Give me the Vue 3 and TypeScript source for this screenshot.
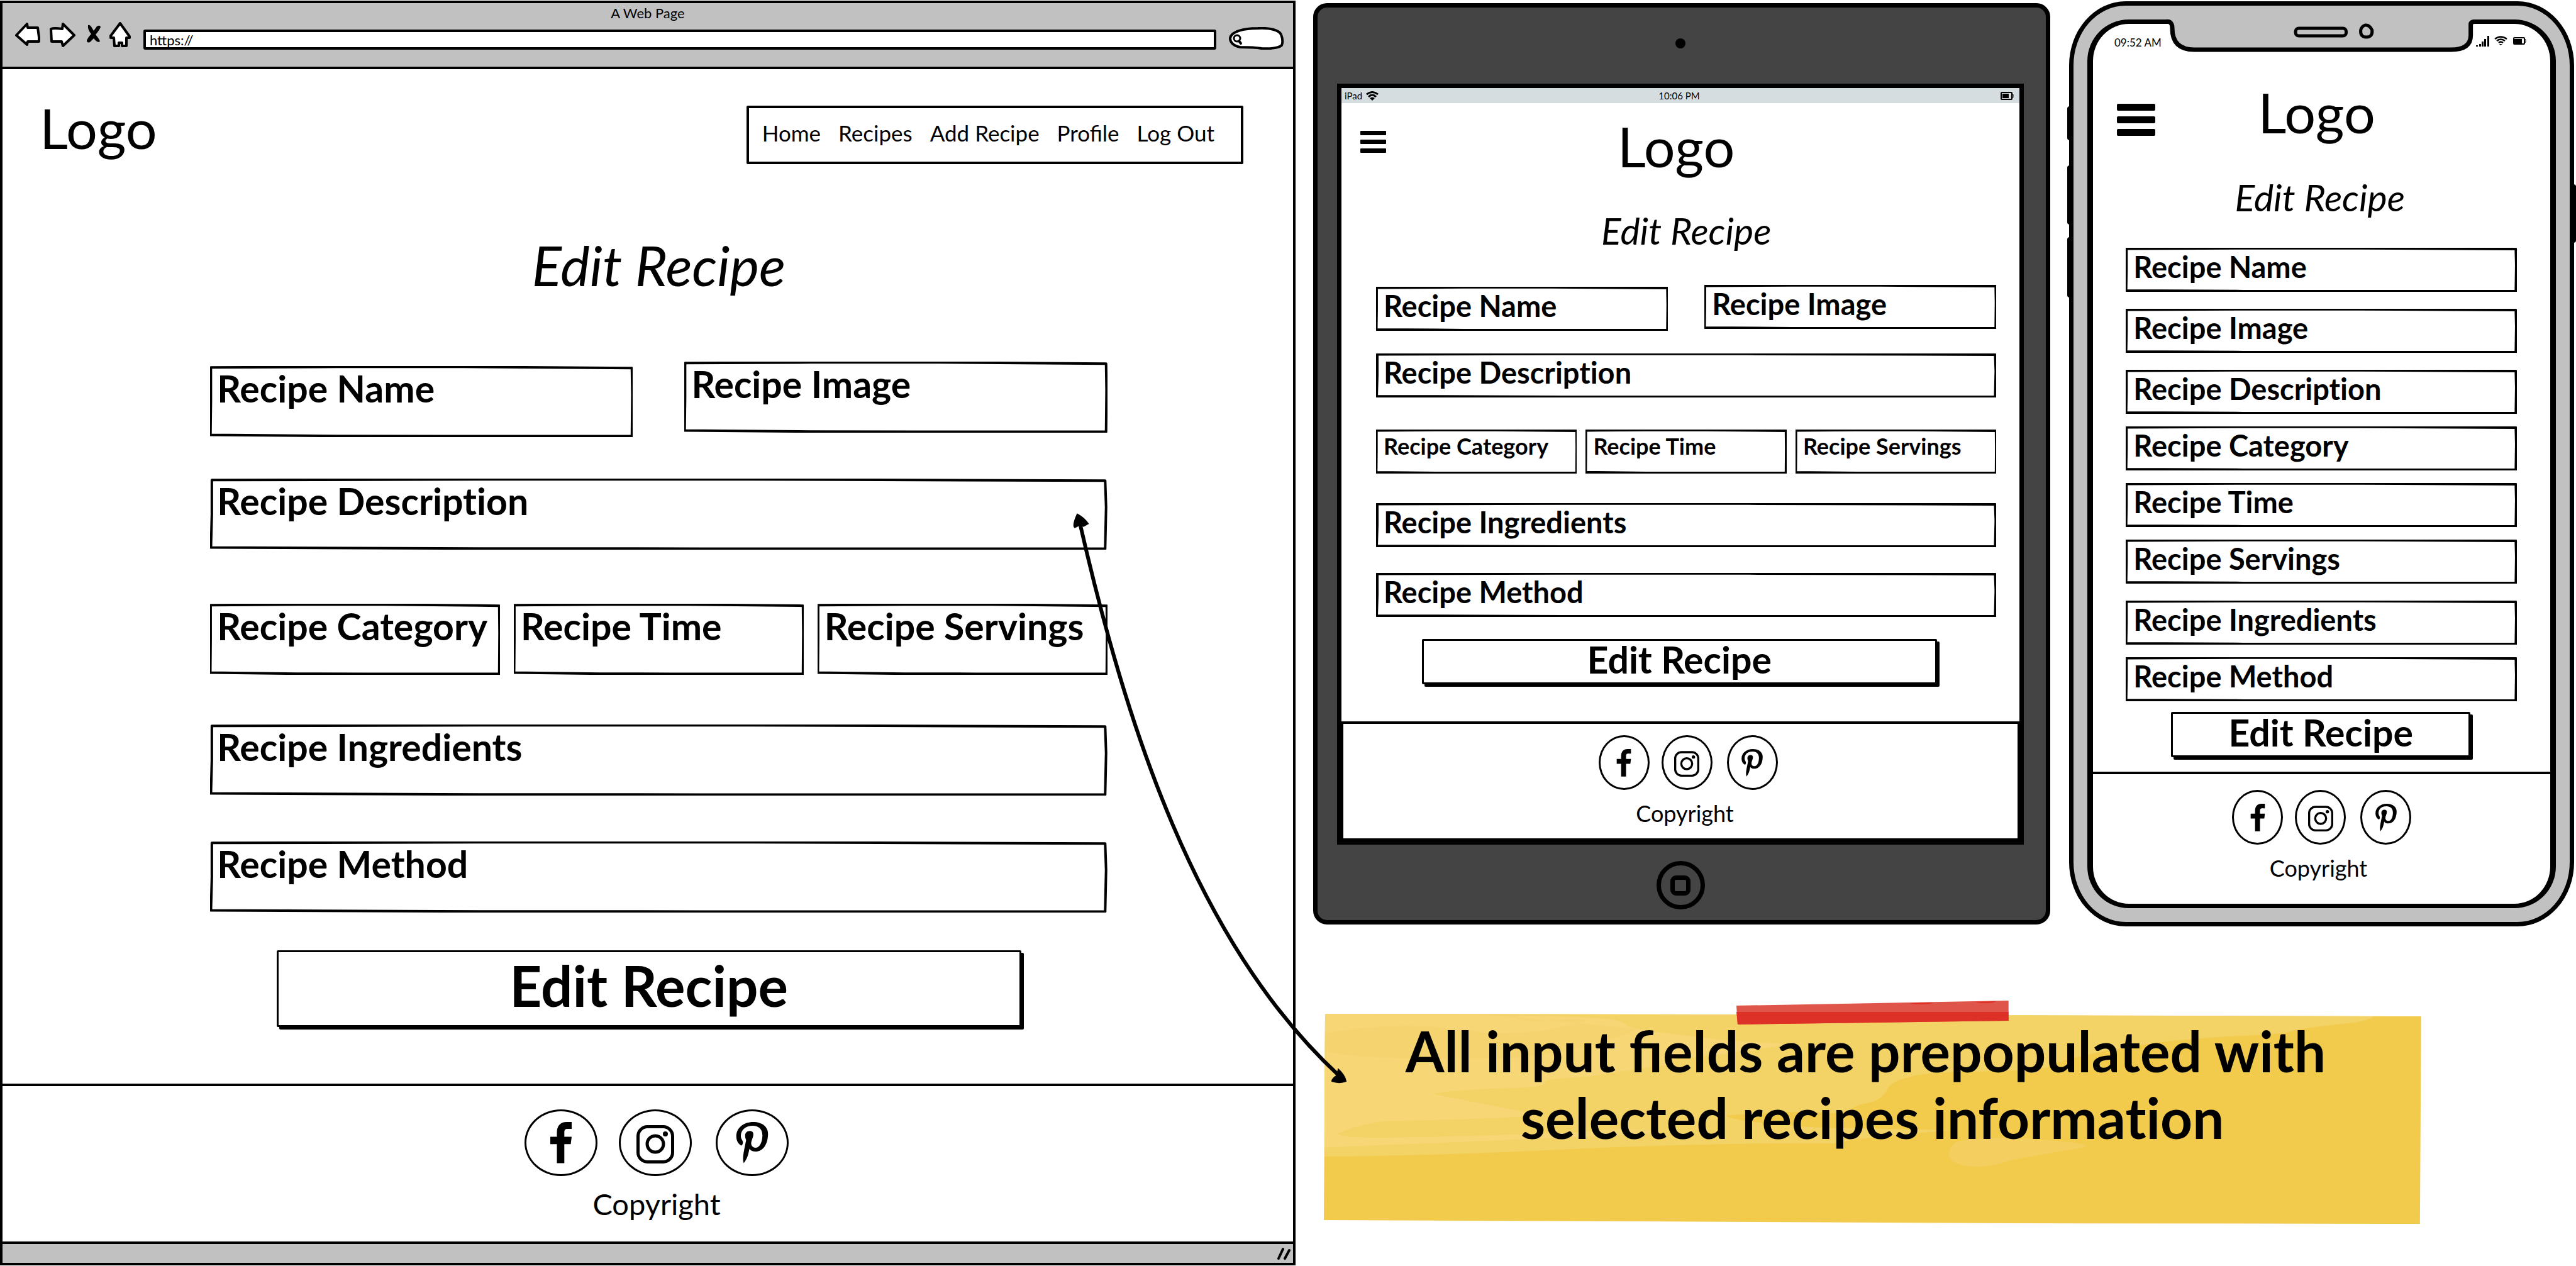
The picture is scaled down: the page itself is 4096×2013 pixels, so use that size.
<script setup lang="ts">
import { reactive } from 'vue'

interface Field {
  name: string
  value: string
}

const field = (name: string): Field => ({ name: name.toLowerCase().replace(' ', '-'), value: name })

const wideRows: string[][] = [
  ['Recipe Name', 'Recipe Image'],
  ['Recipe Description'],
  ['Recipe Category', 'Recipe Time', 'Recipe Servings'],
  ['Recipe Ingredients'],
  ['Recipe Method'],
]

const desktopRows = reactive<Field[][]>(wideRows.map((row) => row.map(field)))
const tabletRows = reactive<Field[][]>(wideRows.map((row) => row.map(field)))
const phoneRows = reactive<Field[][]>(wideRows.flat().map((name) => [field(name)]))

const links: string[] = ['Home', 'Recipes', 'Add Recipe', 'Profile', 'Log Out']

// Slightly uneven hand-drawn rectangle, in percent of the box it outlines
const frame = 'M.2 2 L30 1.2 L60 1.2 L99.8 2.800 L99.9 40 L99.8 98.6 L55 98.6 L30 98.4 L.1 97 L.2 50 Z'

const facebook =
  'M50 0V11H43C39.500 11 38.300 13 38.300 17V23.600H50L48.500 35.300H38.300V65.500H26.500V35.300H16V23.600H26.500V17C26.500 6 32 0 42 0Z'
const pinterest =
  'M16 37.500C11 35.500 7.800 30 7.800 22.600C7.800 9 20 0 34.600 0C49 0 58.200 8 58.200 18.400C58.200 36 49.500 47 38.400 47C34 47 30.500 45.500 28.500 42.700C27 52 25 58.500 19.600 65.500C18.600 62 18.300 59 18.600 55.700C19 49 22 36 23.400 28.700C22.500 27 21.800 24.500 21.800 21.300C21.800 17 25 14.200 29.500 14.200C33 14.200 34.900 16.500 34.900 19.400C34.900 24 31.400 30 31.400 34C31.400 38 34.500 41 38.400 41C46 41 49.300 30 49.300 21.300C49.300 11 43 6 34 6C22 6 15 13 15 22C15 28 18.500 29 18.300 33C18 35 17 37.500 16 37.500Z'

const socials: string[] = ['Facebook', 'Instagram', 'Pinterest']
</script>

<template>
  <main class="board">
    <section class="browser" aria-label="Desktop">
      <header class="chrome">
        <div class="chrome-title">A Web Page</div>
        <div class="toolbar">
          <div class="tools">
            <button type="button" class="tool" aria-label="Back">
              <svg width="40" height="44" viewBox="0 0 40 44">
                <path class="ink" d="M2 21 L19 3 L20 9 L36 9 L38 24 L38 31 L20 31 L19 36 Z" />
              </svg>
            </button>
            <button type="button" class="tool" aria-label="Forward">
              <svg width="42" height="44" viewBox="0 0 42 44">
                <path class="ink" d="M3 11 Q8 9 21 11 L22 3 L40 21 L22 38 L20 31 L4 31 Z" />
              </svg>
            </button>
            <button type="button" class="tool" aria-label="Stop">
              <svg width="26" height="44" viewBox="0 0 26 44">
                <path d="M6 5 Q9 4 12 9 L15 14 L20 7 Q25 4 26 8 Q24 13 18 20 Q24 27 25 31 Q21 34 15 26 L9 32 Q4 34 4 29 Q7 23 11 19 Q5 12 6 5Z" />
              </svg>
            </button>
            <button type="button" class="tool" aria-label="Home">
              <svg width="34" height="44" viewBox="0 0 34 44">
                <path class="ink" d="M17 2 L32 23 L32 25 L27 25 L27 38 L20 38 L20 33 L15 33 L15 38 L8 38 L7 25 L2 25 L2 22 Z" />
              </svg>
            </button>
          </div>
          <input class="url" type="text" value="https://" aria-label="Address" />
          <div class="search">
            <svg viewBox="0 0 88 36" width="88" height="36" aria-hidden="true">
              <path class="ink" d="M46 2 C66 1 80 5 83 12 Q87 22 84 29 C80 33 66 35 52 34 C40 32 28 32 18 32 C7 30 2 24 2 18 C3 7 24 2 46 2Z" />
              <ellipse cx="13" cy="18" rx="5" ry="5" fill="none" stroke="#000" stroke-width="3" />
              <path d="M16 22 L19 26" stroke="#000" stroke-width="4" stroke-linecap="round" />
            </svg>
            <input class="search-input" type="search" aria-label="Search" />
          </div>
        </div>
      </header>

      <div class="page">
        <div class="masthead">
          <div class="logo">Logo</div>
          <nav class="nav">
            <a v-for="link in links" :key="link" href="#">{{ link }}</a>
          </nav>
        </div>
        <form class="form form-desktop" @submit.prevent>
          <h1 class="heading">Edit Recipe</h1>
          <div v-for="(row, i) in desktopRows" :key="i" class="row" :class="`cols-${row.length}`">
            <div v-for="f in row" :key="f.name" class="field">
              <input v-model="f.value" type="text" :name="f.name" :aria-label="f.name" />
              <svg class="frame" viewBox="0 0 100 100" preserveAspectRatio="none" aria-hidden="true"><path :d="frame" /></svg>
            </div>
          </div>
          <button class="submit" type="submit">Edit Recipe</button>
        </form>
        <footer class="foot foot-desktop">
          <div class="socials">
            <a v-for="s in socials" :key="s" class="ring" href="#" :aria-label="s">
              <svg viewBox="0 0 66 66">
                <path v-if="s === 'Facebook'" :d="facebook" />
                <g v-else-if="s === 'Instagram'" fill="none" stroke="#000" stroke-width="5">
                  <rect x="5.500" y="7.500" width="55" height="56" rx="15" />
                  <circle cx="33" cy="35" r="13" />
                  <circle cx="49" cy="19" r="4" fill="#000" stroke="none" />
                </g>
                <path v-else :d="pinterest" />
              </svg>
            </a>
          </div>
          <p class="copyright">Copyright</p>
        </footer>
      </div>
      <div class="statusline">
        <svg width="26" height="20" viewBox="0 0 26 20" aria-hidden="true">
          <path d="M3 18 L10 3 M13 18 L20 5" stroke="#000" stroke-width="4" stroke-linecap="round" />
        </svg>
      </div>
    </section>

    <div class="side">
      <div class="devices">
        <section class="tablet" aria-label="Tablet">
          <div class="camera"></div>
          <div class="tablet-screen">
            <div class="tablet-status">
              <span class="carrier">
                iPad
                <svg width="20" height="15" viewBox="0 0 20 15" aria-hidden="true">
                  <g fill="none" stroke="#000" stroke-width="3">
                    <path d="M1 5 Q10 -2 19 5" />
                    <path d="M4 9 Q10 3 16 9" />
                  </g>
                  <path d="M6 11 Q10 8 14 11 L10 15Z" />
                </svg>
              </span>
              <span>10:06 PM</span>
              <svg class="battery" width="21" height="13" viewBox="0 0 21 13" aria-hidden="true">
                <rect x="1" y="1" width="17" height="11" rx="1" fill="none" stroke="#000" stroke-width="2" />
                <rect x="3" y="3" width="10" height="7" />
                <path d="M18 4 L20 4 L20 9 L18 9" fill="none" stroke="#000" />
              </svg>
            </div>
            <div class="masthead-small masthead-tablet">
              <button type="button" class="burger" aria-label="Menu">
                <svg width="41" height="35" viewBox="0 0 41 35">
                  <rect width="41" height="7" rx="1" /><rect y="14" width="41" height="7" rx="1" /><rect y="28" width="41" height="7" rx="1" />
                </svg>
              </button>
              <div class="logo">Logo</div>
            </div>
            <form class="form form-small form-tablet" @submit.prevent>
              <h1 class="heading">Edit Recipe</h1>
              <div v-for="(row, i) in tabletRows" :key="i" class="row" :class="`cols-${row.length}`">
                <div v-for="f in row" :key="f.name" class="field">
                  <input v-model="f.value" type="text" :name="f.name" :aria-label="f.name" />
                  <svg class="frame" viewBox="0 0 100 100" preserveAspectRatio="none" aria-hidden="true"><path :d="frame" /></svg>
                </div>
              </div>
              <button class="submit" type="submit">Edit Recipe</button>
            </form>
            <footer class="foot foot-small foot-tablet">
              <div class="socials">
                <a v-for="s in socials" :key="s" class="ring" href="#" :aria-label="s">
                  <svg viewBox="0 0 66 66">
                    <path v-if="s === 'Facebook'" :d="facebook" />
                    <g v-else-if="s === 'Instagram'" fill="none" stroke="#000" stroke-width="5">
                      <rect x="5.500" y="7.500" width="55" height="56" rx="15" />
                      <circle cx="33" cy="35" r="13" />
                      <circle cx="49" cy="19" r="4" fill="#000" stroke="none" />
                    </g>
                    <path v-else :d="pinterest" />
                  </svg>
                </a>
              </div>
              <p class="copyright">Copyright</p>
            </footer>
          </div>
          <button type="button" class="home" aria-label="Home button"><span></span></button>
        </section>

        <section class="phone" aria-label="Phone">
          <span class="key key-mute"></span>
          <span class="key key-up"></span>
          <span class="key key-down"></span>
          <span class="key key-power"></span>
          <div class="phone-screen">
            <div class="phone-status">
              <span class="clock">09:52 AM</span>
              <svg class="notch" viewBox="0 0 480 52" preserveAspectRatio="none" aria-hidden="true">
                <path fill="#c1c1c1" d="M-1 -1 L2 6 Q4 12 5 20 Q5 46 39 48 L445 48 Q474 46 476 25 L477 6 L480 -1 Z" />
                <path fill="none" stroke="#000" stroke-width="7" d="M-6 3.500 Q4 2 4 14 Q4 48 39 48 L445 48 Q476 48 476 25 L476 8 Q476 3.500 482 3.500" />
                <rect x="199" y="14" width="80" height="12" rx="5" fill="none" stroke="#000" stroke-width="5" />
                <path fill="none" stroke="#000" stroke-width="5" d="M309 9 Q316 8 320 17 Q321 28 311 28 Q301 28 302 17 Q303 11 309 9Z" />
              </svg>
              <span class="signals">
                <svg width="80" height="18" viewBox="0 0 80 18" aria-hidden="true">
                  <path d="M0 16h3v2h-3zM5 14h3v4h-3zM9 10h3v8h-3zM13 6h3v12h-3zM18 1h3v17h-3z" />
                  <g fill="none" stroke="#000" stroke-width="2.500">
                    <path d="M30 6 Q39 -1 49 6" />
                    <path d="M33 9 Q39 4 46 9" />
                    <path d="M36 12 Q39 9 43 12" />
                  </g>
                  <path d="M37 14 L42 14 L39 16Z" />
                  <rect x="60" y="4" width="17" height="10" rx="1" fill="none" stroke="#000" stroke-width="2" />
                  <rect x="61" y="6" width="12" height="7" />
                  <path d="M77 6 L79 7 L79 11 L77 12" fill="none" stroke="#000" />
                </svg>
              </span>
            </div>
            <div class="masthead-small masthead-phone">
              <button type="button" class="burger" aria-label="Menu">
                <svg width="61" height="51" viewBox="0 0 61 51">
                  <rect width="61" height="11" rx="2" /><rect y="20" width="61" height="11" rx="2" /><rect y="40" width="61" height="11" rx="2" />
                </svg>
              </button>
              <div class="logo">Logo</div>
            </div>
            <form class="form form-small form-phone" @submit.prevent>
              <h1 class="heading">Edit Recipe</h1>
              <div v-for="(row, i) in phoneRows" :key="i" class="row">
                <div v-for="f in row" :key="f.name" class="field">
                  <input v-model="f.value" type="text" :name="f.name" :aria-label="f.name" />
                  <svg class="frame" viewBox="0 0 100 100" preserveAspectRatio="none" aria-hidden="true"><path :d="frame" /></svg>
                </div>
              </div>
              <button class="submit" type="submit">Edit Recipe</button>
            </form>
            <footer class="foot foot-small foot-phone">
              <div class="socials">
                <a v-for="s in socials" :key="s" class="ring" href="#" :aria-label="s">
                  <svg viewBox="0 0 66 66">
                    <path v-if="s === 'Facebook'" :d="facebook" />
                    <g v-else-if="s === 'Instagram'" fill="none" stroke="#000" stroke-width="5">
                      <rect x="5.500" y="7.500" width="55" height="56" rx="15" />
                      <circle cx="33" cy="35" r="13" />
                      <circle cx="49" cy="19" r="4" fill="#000" stroke="none" />
                    </g>
                    <path v-else :d="pinterest" />
                  </svg>
                </a>
              </div>
              <p class="copyright">Copyright</p>
            </footer>
          </div>
        </section>
      </div>

      <aside class="note">
        <svg class="paper" viewBox="0 0 1745 334" preserveAspectRatio="none" aria-hidden="true">
          <path fill="#f2ca4c" d="M2 0 L600 1 L1745 4 L1743 334 L1100 333 L500 330 L0 328 Z" />
          <path fill="#f3d266" d="M2 0 L600 1 L1667 4 Q1672 8 1640 14 Q1560 22 1543 26 Q1540 32 1440 36 Q1340 42 1300 50 Q1230 60 1213 66 Q1170 74 1152 85 Q1110 92 1010 92 Q950 94 930 101 Q900 108 895 122 Q885 140 859 143 Q830 150 842 162 Q770 150 640 162 Q650 172 790 181 L1000 185 Q860 196 810 206 Q600 204 290 220 Q100 227 1 227 Z" />
          <path fill="#f6d675" d="M2 0 L249 1 Q400 4 450 8 Q480 12 483 20 Q510 28 630 41 Q700 46 740 48 Q700 56 620 66 Q530 72 554 80 Q480 90 420 100 Q340 104 353 110 Q350 116 300 118 Q180 122 176 128 L310 154 Q340 160 310 164 Q180 170 103 170 Q60 174 23 190 Q24 197 90 197 Q240 195 400 188 Q470 182 500 184 Q560 186 500 192 Q300 200 170 206 Q50 210 1 213 Z" />
          <path fill="#f3d266" d="M2 31 Q60 20 133 19 Q220 22 260 31 Q340 32 380 20 Q420 12 414 9 Q360 8 340 13 Q290 8 310 3 L249 1 L500 24 Q420 60 300 70 Q80 76 2 60 Z" opacity=".35" />
          <path fill="#f4cf5f" d="M1010 202 Q994 208 994 228 Q1005 244 1045 243 Q1075 240 1091 233 L1205 213 Q1226 208 1175 203 Q1080 192 1010 202Z" />
        </svg>
        <svg class="tape" viewBox="0 0 434 38" preserveAspectRatio="none" aria-hidden="true">
          <path fill="#e0554a" d="M0 8 L434 0 L434 32 L2 38 Z" />
          <path fill="#dd3026" d="M0 18 L434 18 L434 32 L2 38 Z" />
          <path fill="#dd3026" d="M276 4 L314 3 Q310 6 296 6 Q280 6 276 4Z M382 2 L414 1 Q412 4 398 4 Q386 4 382 2Z" />
        </svg>
        <p>All input fields are prepopulated with&nbsp;<br /><span class="plain">selected recipes information</span></p>
      </aside>
    </div>

    <svg class="arrow" viewBox="0 0 4096 2013" preserveAspectRatio="none" aria-hidden="true">
      <path d="M1717 832 C1790 1150 1900 1500 2130 1712" fill="none" stroke="#000" stroke-width="6" />
      <path d="M1713 818 Q1724 824 1730 833 L1723 837 L1717 835 L1709 839 Q1705 836 1713 818Z" stroke="#000" stroke-width="2" />
      <path d="M2128 1701 Q2138 1710 2140 1720 Q2130 1724 2118 1720 Q2118 1716 2126 1711Z" stroke="#000" stroke-width="2" />
    </svg>
  </main>
</template>

<style>
body {
  margin: 0;
  background: #fff;
}
</style>

<style scoped>
.board {
  position: relative;
  display: grid;
  grid-template-columns: 2060fr 2036fr;
  align-items: start;
  color: #000;
  font-family: Lato, 'Liberation Sans', sans-serif;
}

.board *,
.board {
  box-sizing: border-box;
}

button {
  padding: 0;
  border: 0;
  background: none;
  color: inherit;
  font-family: inherit;
}

input {
  min-width: 0;
  margin: 0;
  border: 0;
  outline: 0;
  background: none;
  color: inherit;
  font-family: inherit;
}

a {
  color: inherit;
  text-decoration: none;
}

svg {
  display: block;
}

.ink {
  fill: #fff;
  stroke: #000;
  stroke-width: 4;
  stroke-linejoin: round;
}

.logo {
  font-size: 88px;
  line-height: 106px;
}

.heading {
  margin: 0;
  font-style: italic;
  font-weight: 400;
  text-align: center;
}

/* Desktop browser */
.browser {
  margin-top: 1px;
  border: 4px solid #000;
  background: #fff;
}

.chrome {
  padding: 2px 0 27px;
  border-bottom: 4px solid #000;
  background: #c1c1c1;
}

.chrome-title {
  font-size: 22px;
  line-height: 28px;
  text-align: center;
}

.toolbar {
  display: flex;
  align-items: flex-end;
  gap: 20px;
  padding: 0 14px 0 20px;
}

.tools {
  display: flex;
  gap: 14px;
}

.url {
  flex: 1;
  height: 32px;
  padding: 0 6px;
  border: 4px solid #000;
  border-radius: 3px;
  background: #fff;
  font-size: 22px;
  line-height: 24px;
}

.search {
  position: relative;
}

.search-input {
  position: absolute;
  inset: 6px 8px 6px 24px;
  width: 56px;
}

.masthead {
  display: flex;
  align-items: flex-start;
  justify-content: space-between;
  padding: 40px 79px 0 59px;
}

.nav {
  display: flex;
  gap: 28px;
  margin-top: 18px;
  padding: 15px 42px 22px 21px;
  border: 4px solid #000;
  border-radius: 2px;
  font-size: 35px;
  line-height: 48px;
}

/* Forms */
.row {
  display: grid;
}

.cols-2 {
  grid-template-columns: 1fr 1fr;
}

.cols-2 .field:first-child {
  align-self: end;
}

.cols-3 {
  grid-template-columns: 1fr 1fr 1fr;
}

.field {
  position: relative;
  align-self: start;
}

.field input {
  display: block;
  width: 100%;
  font-weight: 700;
  font-variant-ligatures: none;
}

.frame {
  position: absolute;
  inset: 0;
  width: 100%;
  height: 100%;
  pointer-events: none;
}

.frame path {
  fill: none;
  stroke: #000;
  stroke-width: 4px;
  stroke-linejoin: round;
  vector-effect: non-scaling-stroke;
}

.submit {
  display: block;
  width: 83%;
  margin-left: 7.4%;
  border: 3px solid #000;
  border-radius: 2px;
  box-shadow: 4px 4px 0 #000;
  background: #fff;
  font-weight: 700;
}

.form-desktop {
  padding: 107px 14.4% 90px 16.1%;
}

.form-desktop .heading {
  margin-bottom: 101px;
  font-size: 88px;
  line-height: 106px;
}

.form-desktop .field input {
  height: 113px;
  padding: 0 11px 43px;
  font-size: 59px;
  line-height: 70px;
}

.form-desktop .cols-2 {
  min-height: 120px;
  column-gap: 82px;
  margin-bottom: 66px;
}

.form-desktop .cols-3 {
  column-gap: 22px;
  margin: 86px 0 79px;
}

.form-desktop .cols-1 + .cols-1 {
  margin: 73px 0 60px;
}

.form-desktop .submit {
  padding-bottom: 10px;
  font-size: 89px;
  line-height: 106px;
}

.form-small .heading {
  font-size: 59px;
  line-height: 70px;
}

.form-small .field input {
  height: 70px;
  padding: 0 12px 10px;
  font-size: 47px;
  line-height: 60px;
}

.form-small .submit {
  padding-bottom: 6px;
  font-size: 59px;
  line-height: 60px;
}

/* Footers */
.foot {
  border-top: 4px solid #000;
}

.socials {
  display: flex;
  justify-content: center;
}

.ring {
  display: grid;
  place-items: center;
  border: 3px solid #000;
  border-radius: 50%;
}

.ring:last-child {
  margin-left: 4px;
}

.copyright {
  margin: 16px 0 0;
  text-align: center;
}

.foot-desktop {
  padding: 37px 0 32px 28px;
}

.foot-desktop .socials {
  gap: 34px;
}

.foot-desktop .ring {
  width: 116px;
  height: 106px;
}

.foot-desktop .ring svg {
  width: 66px;
  height: 66px;
}

.foot-desktop .copyright {
  font-size: 47px;
  line-height: 56px;
}

.foot-small .socials {
  gap: 19px;
}

.foot-small .ring {
  width: 81px;
  height: 87px;
}

.foot-small .ring svg {
  width: 44px;
  height: 44px;
}

.foot-small .copyright {
  padding-right: 10px;
  font-size: 36px;
  line-height: 42px;
}

.statusline {
  display: flex;
  align-items: center;
  justify-content: flex-end;
  height: 34px;
  border-top: 4px solid #000;
  background: #c1c1c1;
}

/* Devices */
.devices {
  display: grid;
  grid-template-columns: 1172fr 803fr;
  align-items: start;
  gap: 30px;
  padding: 0 3px 0 28px;
}

.tablet {
  margin-top: 5px;
  padding: 49px 35px 17px 31px;
  border: 7px solid #000;
  border-radius: 22px;
  background: #444;
}

.camera {
  width: 16px;
  height: 16px;
  margin: 0 auto 56px;
  border-radius: 50%;
  background: #000;
}

.tablet-screen {
  border: 7px solid #000;
  background: #fff;
}

.tablet-status {
  display: grid;
  grid-template-columns: 1fr auto 1fr;
  align-items: center;
  padding: 0 9px 0 5px;
  background: #d6dde0;
  font-size: 15px;
  line-height: 24px;
}

.carrier {
  display: flex;
  align-items: center;
  gap: 6px;
}

.battery {
  justify-self: end;
}

.masthead-small {
  display: grid;
  grid-template-columns: 1fr auto 1fr;
  align-items: start;
}

.burger {
  justify-self: start;
}

.masthead-tablet {
  padding: 15px 14px 0 0;
}

.masthead-tablet .burger {
  margin: 29px 0 0 30px;
}

.form-tablet {
  padding: 47px 3.4% 59px 5.1%;
}

.form-tablet .heading {
  margin-bottom: 51px;
}

.form-tablet .cols-2 {
  min-height: 73px;
  column-gap: 58px;
  margin-bottom: 36px;
}

.form-tablet .cols-3 {
  column-gap: 14px;
  margin: 51px 0 47px;
}

.form-tablet .cols-3 .field input {
  padding-bottom: 18px;
  font-size: 36px;
  line-height: 52px;
}

.form-tablet .cols-1 + .cols-1 {
  margin: 41px 0 35px;
}

.foot-tablet {
  padding: 18px 0 19px 24px;
  border-right: 3px solid #000;
  border-bottom: 3px solid #000;
  border-left: 3px solid #000;
}

.home {
  display: grid;
  place-items: center;
  width: 77px;
  height: 77px;
  margin: 26px auto 0;
  border: 7px solid #000;
  border-radius: 50%;
}

.home span {
  width: 32px;
  height: 32px;
  border: 7px solid #000;
  border-radius: 9px;
}

.phone {
  position: relative;
  margin-top: 2px;
  padding: 22px;
  border: 7px solid #000;
  border-radius: 90px / 102px;
  background: #c1c1c1;
}

.key {
  position: absolute;
  left: -10px;
  width: 8px;
  border-radius: 4px;
  background: #000;
}

.key-mute {
  top: 160px;
  height: 54px;
}

.key-up {
  top: 254px;
  height: 94px;
}

.key-down {
  top: 368px;
  height: 96px;
}

.key-power {
  top: 284px;
  right: -10px;
  left: auto;
  height: 93px;
}

.phone-screen {
  border: solid #000;
  border-width: 7px 9px;
  border-radius: 66px;
  background: #fff;
}

.phone-status {
  display: grid;
  grid-template-columns: 121fr 480fr 122fr;
  align-items: start;
}

.clock {
  padding: 18px 0 0 34px;
  font-size: 17px;
  line-height: 24px;
  white-space: nowrap;
}

.notch {
  width: 100%;
  height: 52px;
  margin-top: -7px;
  overflow: visible;
}

.signals {
  padding: 18px 0 0 5px;
}

.masthead-phone {
  padding: 42px 16px 0 0;
}

.masthead-phone .burger {
  margin: 40px 0 0 38px;
}

.form-phone {
  padding: 48px 7.3% 23px 7.2%;
}

.form-phone .heading {
  margin-bottom: 45px;
  padding-right: 5px;
}

.form-phone .row {
  margin-bottom: 20px;
}

.form-phone .row:nth-of-type(1),
.form-phone .row:nth-of-type(2),
.form-phone .row:nth-of-type(6) {
  margin-bottom: 27px;
}

.form-phone .row:last-of-type {
  margin-bottom: 17px;
}

.form-phone .submit {
  width: 76.5%;
  margin-left: 11.6%;
}

.foot-phone {
  padding: 25px 0 36px;
}

/* Sticky note */
.note {
  position: relative;
  width: 85.7%;
  margin: 139px 0 0 2.2%;
  padding: 6px 0 116px;
}

.paper {
  position: absolute;
  inset: 0;
  width: 100%;
  height: 100%;
}

.tape {
  position: absolute;
  top: -21px;
  left: 37.6%;
  width: 24.8%;
  height: 38px;
}

.note p {
  position: relative;
  margin: 0;
  font-size: 89px;
  font-weight: 700;
  line-height: 106px;
  text-align: center;
}

.plain {
  font-variant-ligatures: none;
}

.arrow {
  position: absolute;
  inset: 0;
  width: 100%;
  height: 100%;
  pointer-events: none;
}
</style>
